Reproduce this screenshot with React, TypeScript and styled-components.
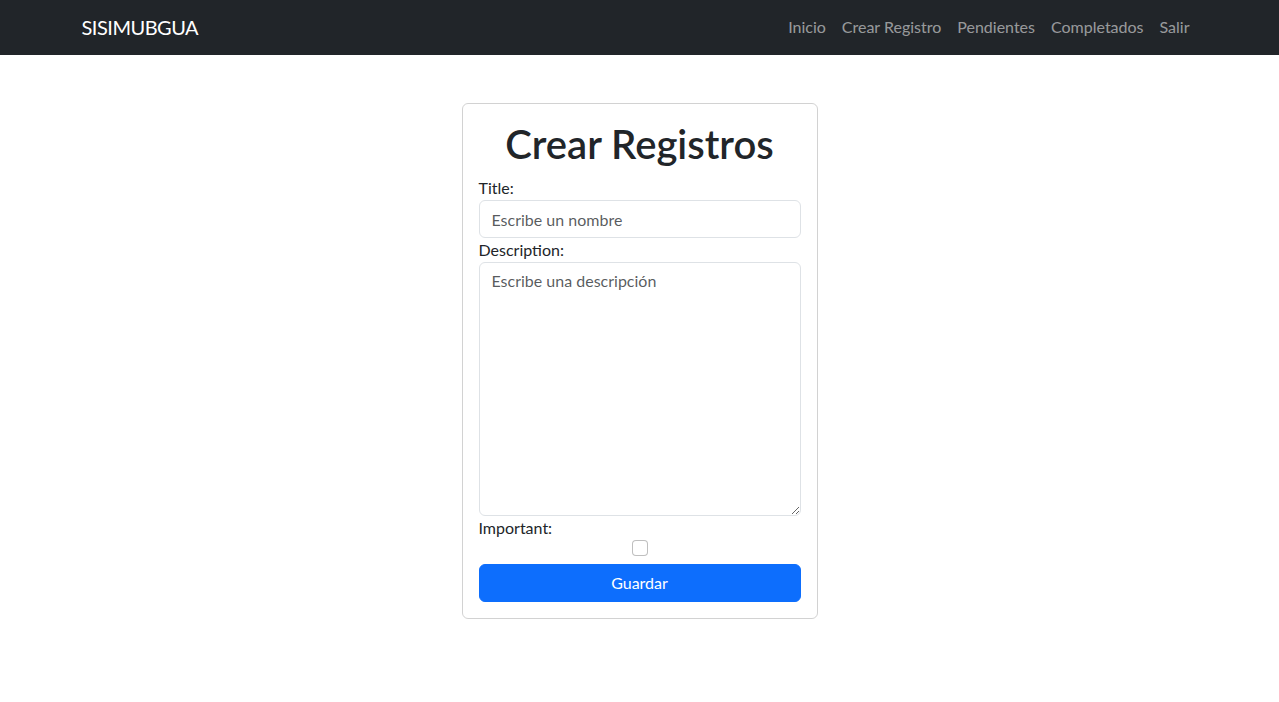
import React from "react";
import styled, { createGlobalStyle } from "styled-components";

const GlobalStyle = createGlobalStyle`
  * { box-sizing: border-box; }
  body {
    margin: 0;
    font-family: Lato, "Noto Sans", sans-serif;
    font-size: 16px;
    line-height: 1.5;
    color: #212529;
    background: #fff;
  }
`;

const NavBar = styled.nav`
  background: #212529;
  height: 55px;
  padding-bottom: 2px;
  display: flex;
  align-items: center;
`;

const NavContainer = styled.div`
  width: 1140px;
  margin: 0 auto;
  padding: 0 12px;
  display: flex;
  align-items: center;
  justify-content: space-between;
`;

const Brand = styled.a`
  color: #fff;
  font-size: 20px;
  line-height: 30px;
  letter-spacing: -0.5px;
  text-decoration: none;
`;

const NavList = styled.div`
  display: flex;
`;

const NavLink = styled.a`
  color: rgba(255, 255, 255, 0.55);
  font-size: 16px;
  line-height: 24px;
  padding: 8px;
  text-decoration: none;
`;

const Main = styled.main`
  display: flex;
  justify-content: center;
  padding-top: 48px;
`;

const Card = styled.form`
  width: 356px;
  border: 1px solid rgba(0, 0, 0, 0.175);
  border-radius: 6px;
  padding: 16px;
  display: flex;
  flex-direction: column;
`;

const Heading = styled.h1`
  margin: 0 0 8px;
  font-size: 40px;
  line-height: 48px;
  font-weight: 600;
  text-align: center;
`;

const Label = styled.label`
  display: block;
  font-size: 16px;
  line-height: 24px;
`;

const fieldCss = `
  width: 100%;
  font-family: inherit;
  font-size: 16px;
  line-height: 24px;
  color: #212529;
  padding: 6px 12px;
  border: 1px solid #dee2e6;
  border-radius: 6px;
  background: #fff;
  outline: none;
  &::placeholder { color: rgba(33, 37, 41, 0.75); }
`;

const Input = styled.input`
  ${fieldCss}
  height: 38px;
`;

const TextArea = styled.textarea`
  ${fieldCss}
  height: 254px;
  display: block;
  resize: vertical;
`;

const CheckRow = styled.div`
  display: flex;
  justify-content: center;
  height: 16px;
`;

const Check = styled.input`
  appearance: none;
  width: 16px;
  height: 16px;
  margin: 0;
  border: 1px solid rgba(0, 0, 0, 0.25);
  border-radius: 4px;
  background: #fff;
`;

const Button = styled.button`
  margin-top: 8px;
  height: 38px;
  width: 100%;
  background: #0d6efd;
  color: #fff;
  border: 1px solid #0d6efd;
  border-radius: 6px;
  font-family: inherit;
  font-size: 16px;
  line-height: 24px;
  padding: 6px 12px;
  cursor: pointer;
`;

export default function App() {
  return (
    <>
      <GlobalStyle />
      <NavBar>
        <NavContainer>
          <Brand href="#">SISIMUBGUA</Brand>
          <NavList>
            <NavLink href="#">Inicio</NavLink>
            <NavLink href="#">Crear Registro</NavLink>
            <NavLink href="#">Pendientes</NavLink>
            <NavLink href="#">Completados</NavLink>
            <NavLink href="#">Salir</NavLink>
          </NavList>
        </NavContainer>
      </NavBar>
      <Main>
        <Card onSubmit={(e) => e.preventDefault()}>
          <Heading>Crear Registros</Heading>
          <Label htmlFor="title">Title:</Label>
          <Input id="title" type="text" placeholder="Escribe un nombre" />
          <Label htmlFor="desc">Description:</Label>
          <TextArea id="desc" placeholder="Escribe una descripción" />
          <Label htmlFor="imp">Important:</Label>
          <CheckRow>
            <Check id="imp" type="checkbox" />
          </CheckRow>
          <Button type="submit">Guardar</Button>
        </Card>
      </Main>
    </>
  );
}
